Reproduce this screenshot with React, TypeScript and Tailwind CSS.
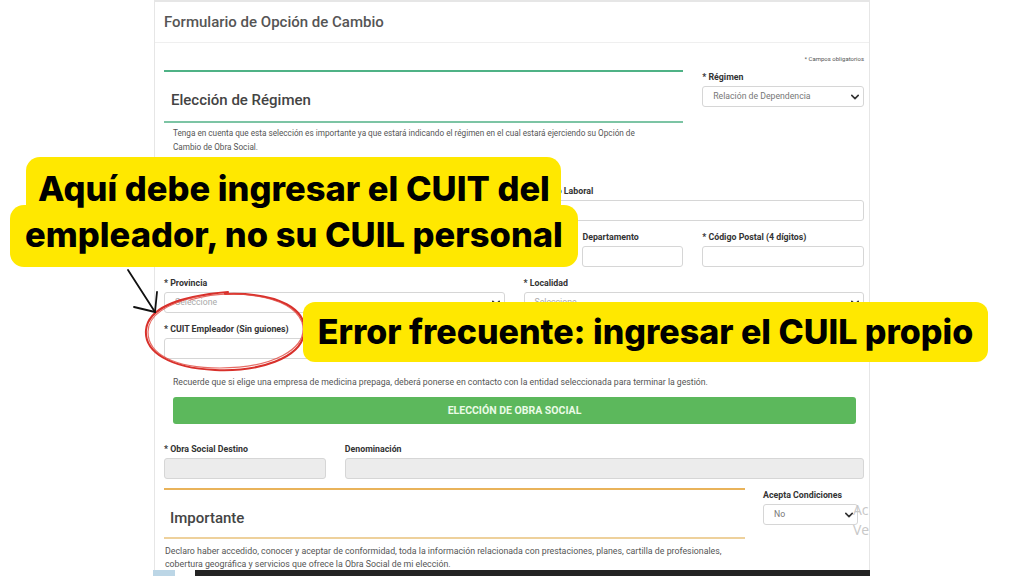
import React from "react";

const Chevron = ({ className = "" }: { className?: string }) => (
  <svg viewBox="0 0 10 6" className={className} fill="none" stroke="#333" strokeWidth="2" strokeLinecap="round" strokeLinejoin="round">
    <path d="M1 1l4 4 4-4" />
  </svg>
);

const Label = ({ children }: { children: React.ReactNode }) => (
  <div className="h-[12px] text-[8.8px] leading-[12px] font-bold text-[#333] whitespace-nowrap">{children}</div>
);

const Input = ({ gray = false }: { gray?: boolean }) => (
  <div className={`mt-[3px] h-[21px] rounded-[3px] border border-[#d6d6d6] ${gray ? "bg-[#ececec]" : "bg-white"}`} />
);

const Select = ({ text, gray = false }: { text: string; gray?: boolean }) => (
  <div className="mt-[3px] h-[21px] rounded-[3px] border border-[#d6d6d6] bg-white flex items-center justify-between pl-[10px] pr-[4px]">
    <span className={`text-[8.7px] ${gray ? "text-[#aaa]" : "text-[#777]"}`}>{text}</span>
    <Chevron className="w-[8px] h-[6px]" />
  </div>
);

export default function App() {
  return (
    <div className="relative w-[1024px] h-[576px] overflow-hidden bg-white" style={{ fontFamily: "Roboto, 'Liberation Sans', sans-serif" }}>
      <div className="ml-[154px] w-[716px] h-[576px] border-l border-r border-t-[2px] border-[#e6e6e6]">
        <div className="h-[41px] border-b border-[#efefef] pl-[9px] flex items-center">
          <span className="text-[15px] font-medium text-[#555]">Formulario de Opción de Cambio</span>
        </div>
        <div className="pl-[9px] pr-[5px]">
          <div className="mt-[11px] h-[10px] text-right text-[6px] leading-[10px] text-[#555]">* Campos obligatorios</div>
          <div className="mt-[6px] flex gap-[19px]">
            <div className="w-[520px]">
              <div className="h-[2px] bg-[#4fb286]" />
              <div className="pt-[18px] pb-[11px] pl-[7px] text-[15px] leading-[20px] font-medium text-[#444]">Elección de Régimen</div>
              <div className="h-[2px] bg-[#7cc4a4]" />
              <div className="mt-[3px] pl-[9px] text-[8.2px] leading-[14px] text-[#555] whitespace-nowrap">
                Tenga en cuenta que esta selección es importante ya que estará indicando el régimen en el cual estará ejerciendo su Opción de
                <br />
                Cambio de Obra Social.
              </div>
            </div>
            <div className="w-[162px]">
              <div className="mt-[1px]"><Label>* Régimen</Label></div>
              <div className="mt-[1px]"><Select text="Relación de Dependencia" /></div>
            </div>
          </div>
          <div className="mt-[31px] flex gap-[19px]">
            <div className="w-[341px]"><Label>&nbsp;</Label><Input /></div>
            <div className="w-[341px]"><div className="pl-[1px]"><Label>Domicilio Laboral</Label></div><Input /></div>
          </div>
          <div className="mt-[10px] flex gap-[19px]">
            <div className="w-[162px]"><Label>&nbsp;</Label><Input /></div>
            <div className="w-[160px]"><Label>&nbsp;</Label><Input /></div>
            <div className="w-[40px]"><Label>&nbsp;</Label><Input /></div>
            <div className="w-[101px]"><Label>Departamento</Label><Input /></div>
            <div className="w-[162px]"><Label>* Código Postal (4 dígitos)</Label><Input /></div>
          </div>
          <div className="mt-[10px] flex gap-[19px]">
            <div className="w-[341px]"><Label>* Provincia</Label><Select text="Seleccione" gray /></div>
            <div className="w-[341px]"><Label>* Localidad</Label><Select text="Seleccione" gray /></div>
          </div>
          <div className="mt-[10px] flex gap-[19px]">
            <div className="w-[162px]"><Label>* CUIT Empleador (Sin guiones)</Label><Input /></div>
          </div>
          <div className="mt-[17px] pl-[9px] h-[12px] text-[8.7px] leading-[12px] text-[#555] whitespace-nowrap">
            Recuerde que si elige una empresa de medicina prepaga, deberá ponerse en contacto con la entidad seleccionada para terminar la gestión.
          </div>
          <div className="mt-[9px] ml-[9px] w-[683px] h-[27px] rounded-[3px] bg-[#5cb85c] flex items-center justify-center">
            <span className="text-[10.5px] font-bold text-[#eafbe6]">ELECCIÓN DE OBRA SOCIAL</span>
          </div>
          <div className="mt-[19px] flex gap-[19px]">
            <div className="w-[162px]"><Label>* Obra Social Destino</Label><Input gray /></div>
            <div className="w-[520px]"><Label>Denominación</Label><Input gray /></div>
          </div>
          <div className="mt-[9px] flex gap-[18px]">
            <div className="w-[581px]">
              <div className="h-[2px] bg-[#e9b35a]" />
              <div className="pt-[18px] pb-[9px] pl-[6px] text-[15px] leading-[20px] font-medium text-[#444]">Importante</div>
              <div className="h-[2px] bg-[#eed19c]" />
              <div className="mt-[6px] pl-[1px] text-[8.8px] leading-[13px] text-[#555] whitespace-nowrap">
                Declaro haber accedido, conocer y aceptar de conformidad, toda la información relacionada con prestaciones, planes, cartilla de profesionales,
                <br />
                cobertura geográfica y servicios que ofrece la Obra Social de mi elección.
              </div>
            </div>
            <div className="w-[95px]">
              <div className="mt-[1px]"><Label>Acepta Condiciones</Label></div>
              <div className="mt-[1px]"><Select text="No" /></div>
            </div>
          </div>
        </div>
      </div>

      {/* faint watermark */}
      <div className="absolute left-[853px] top-[500px] text-[14px] leading-[20px] text-[#c8c8c8]" style={{ fontFamily: "'Open Sans', sans-serif" }}>
        <div>Ac</div>
        <div>Ve</div>
      </div>

      {/* bottom bar */}
      <div className="absolute left-[153px] top-[570px] w-[22px] h-[6px] bg-[#bcd6e6]" />
      <div className="absolute left-[195px] top-[570px] w-[675px] h-[6px] bg-[#232323]" />

      {/* red circle */}
      <svg className="absolute left-[130px] top-[280px]" width="190" height="100" viewBox="0 0 190 100" fill="none">
        <path d="M95 14 C150 12 178 30 174 54 C170 78 130 92 85 90 C40 88 14 72 16 50 C18 28 50 16 98 12" stroke="#d8302b" strokeWidth="2" strokeLinecap="round" />
        <path d="M60 20 C100 8 160 14 172 42 C180 70 140 88 90 88 C44 88 18 74 18 52 C18 36 34 24 70 16" stroke="#e0473f" strokeWidth="1.2" strokeLinecap="round" opacity="0.8" />
      </svg>

      {/* arrow */}
      <svg className="absolute left-[120px] top-[262px]" width="45" height="60" viewBox="0 0 45 60" fill="none" stroke="#111" strokeWidth="1.8" strokeLinecap="round">
        <path d="M8 8 L35 50" />
        <path d="M14 45 L35 50" />
        <path d="M37 30 L35 50" />
      </svg>

      {/* yellow callout 1: two-line highlighted text */}
      <div className="absolute left-[10px] top-[157px] w-[568px] h-[110px]" style={{ fontFamily: "Inter, 'Noto Sans', sans-serif" }}>
        <div className="absolute left-[16px] top-0 w-[535px] h-[62px] rounded-[14px] bg-[#ffe800]" />
        <div className="absolute left-0 top-[48px] w-[568px] h-[62px] rounded-[14px] bg-[#ffe800]" />
        <div className="relative flex flex-col items-center pt-[9px]">
          <div className="text-[34.5px] leading-[46px] font-extrabold text-black whitespace-nowrap">Aquí debe ingresar el CUIT del</div>
          <div className="text-[34.5px] leading-[46px] font-extrabold text-black whitespace-nowrap">empleador, no su CUIL personal</div>
        </div>
      </div>

      {/* yellow callout 2 */}
      <div className="absolute left-[303px] top-[302px] w-[685px] h-[60px] rounded-[12px] bg-[#ffe800] flex items-center justify-center" style={{ fontFamily: "Inter, 'Noto Sans', sans-serif" }}>
        <div className="text-[34px] leading-[40px] font-extrabold text-black whitespace-nowrap">Error frecuente: ingresar el CUIL propio</div>
      </div>
    </div>
  );
}
